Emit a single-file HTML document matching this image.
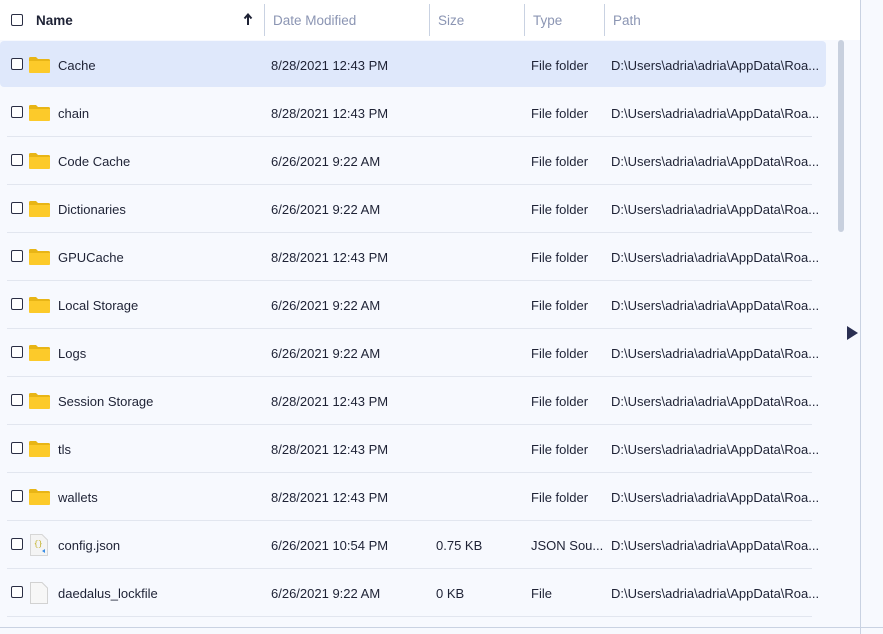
<!DOCTYPE html>
<html><head><style>
*{margin:0;padding:0;box-sizing:border-box}
body{width:883px;height:634px;overflow:hidden;background:#f7f9fe;font-family:"Liberation Sans",sans-serif;font-size:13px;color:#1e2235;position:relative}
.hdr{position:absolute;left:0;top:0;width:860px;height:40px;background:#fff}
.h{position:absolute;top:13px;color:#8b95b3;font-size:13.5px}
.sep{position:absolute;top:4px;width:1px;height:32px;background:#c9d2e2}
.cb{position:absolute;width:12px;height:12px;border:1.5px solid #2a2e44;border-radius:2px;background:#fff}
.row{position:absolute;left:0;width:826px;height:48px}
.row .line{position:absolute;left:7px;right:14px;bottom:0;height:1px;background:#e2e6ef}
.row span{position:absolute;top:17px;white-space:nowrap}
.sel{background:#dfe8fb;border-radius:4px;height:46px}
.fold{position:absolute;left:29px;top:16px;width:21px;height:16px}
.right{position:absolute;left:860px;top:0;width:23px;height:634px;background:#f7f9fe;border-left:1px solid #c9d2e2}
</style></head><body>
<div class="hdr">
<div class="cb" style="left:11px;top:14px"></div>
<div class="h" style="left:36px;color:#1e2235;font-weight:bold">Name</div>
<svg style="position:absolute;left:243px;top:13px" width="10" height="13"><path d="M5 12V2M1.5 5.5L5 1.5L8.5 5.5" stroke="#1e2235" stroke-width="2" fill="none"/></svg>
<div class="sep" style="left:264px"></div>
<div class="h" style="left:273px">Date Modified</div>
<div class="sep" style="left:429px"></div>
<div class="h" style="left:438px">Size</div>
<div class="sep" style="left:524px"></div>
<div class="h" style="left:533px">Type</div>
<div class="sep" style="left:604px"></div>
<div class="h" style="left:613px">Path</div>
</div>
<div style="position:absolute;left:838px;top:40px;width:6px;height:192px;background:#c8d0de;border-radius:3px"></div>
<div class="right"></div>
<svg style="position:absolute;left:846px;top:325px" width="14" height="16"><path d="M1 1L12 8L1 15Z" fill="#2a2f52"/></svg>
<div style="position:absolute;left:0;top:627px;width:883px;height:1px;background:#c9d2e2"></div>
<div id="rows"></div>
<script>
const d=[["Cache","8/28/2021 12:43 PM","","File folder"],["chain","8/28/2021 12:43 PM","","File folder"],["Code Cache","6/26/2021 9:22 AM","","File folder"],["Dictionaries","6/26/2021 9:22 AM","","File folder"],["GPUCache","8/28/2021 12:43 PM","","File folder"],["Local Storage","6/26/2021 9:22 AM","","File folder"],["Logs","6/26/2021 9:22 AM","","File folder"],["Session Storage","8/28/2021 12:43 PM","","File folder"],["tls","8/28/2021 12:43 PM","","File folder"],["wallets","8/28/2021 12:43 PM","","File folder"],["config.json","6/26/2021 10:54 PM","0.75 KB","JSON Sou..."],["daedalus_lockfile","6/26/2021 9:22 AM","0 KB","File"]];
let h="";
d.forEach((r,i)=>{
const top=41+i*48;
let icon;
if(i<10)icon='<svg class="fold" viewBox="0 0 21 16"><path d="M0 1.5Q0 0 1.5 0H7L9 2H19.5Q21 2 21 3.5V14.5Q21 16 19.5 16H1.5Q0 16 0 14.5Z" fill="#e8b516"/><path d="M0 4H21V14.5Q21 16 19.5 16H1.5Q0 16 0 14.5Z" fill="#fcca2a"/></svg>';
else if(i==10)icon='<svg style="position:absolute;left:30px;top:13px" width="18" height="22"><path d="M0.5 0.5H12L17.5 6V21.5H0.5Z" fill="#f4f4f4" stroke="#d6d6d6"/><text x="4" y="12" font-size="7" fill="#b9a400" font-family="Liberation Mono">{}</text><path d="M12 17l3-2v4z" fill="#3a8ee6"/></svg>';
else icon='<svg style="position:absolute;left:30px;top:13px" width="18" height="22"><path d="M0.5 0.5H12L17.5 6V21.5H0.5Z" fill="#f7f7f7" stroke="#d2d2d2"/></svg>';
h+=`<div class="row${i==0?' sel':''}" style="top:${top}px"><div class="cb" style="left:11px;top:17px"></div>${icon}<span style="left:58px">${r[0]}</span><span style="left:271px">${r[1]}</span><span style="left:436px">${r[2]}</span><span style="left:531px">${r[3]}</span><span style="left:611px">D:\\Users\\adria\\adria\\AppData\\Roa...</span>${i==0?'':'<div class="line"></div>'}</div>`;
});
document.getElementById("rows").innerHTML=h;
</script>
</body></html>
